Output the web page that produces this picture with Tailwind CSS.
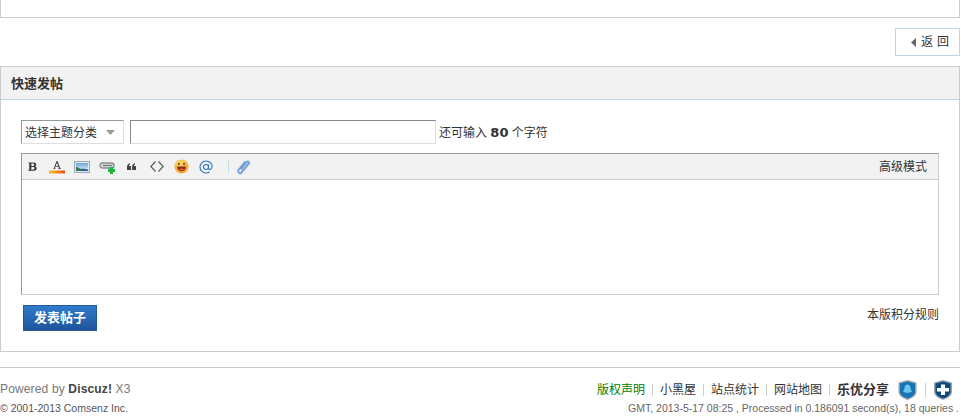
<!DOCTYPE html>
<html lang="zh-CN">
<head>
  <meta charset="UTF-8" />
  <title>快速发帖</title>
  <script src="https://cdn.jsdelivr.net/npm/@tailwindcss/browser@4"></script>
</head>
<body class="bg-white text-[12px] leading-[16px] text-[#444] font-['Liberation_Sans','Noto_Sans_CJK_SC',sans-serif] overflow-hidden">
 <div class="w-[960px]">

  <!-- end of the thread list -->
  <div class="h-[18px] border-x border-b border-[#cdcdcd]"></div>

  <div class="mt-[10px] flex justify-end">
    <a class="w-[65px] h-[28px] border border-[#c2d5e3] flex items-center justify-end pr-[10px] gap-[5px] text-[#333]">
      <svg width="5" height="9" viewBox="0 0 5 9"><path d="M5 0v9L0 4.500z" fill="#666"/></svg>
      <span class="tracking-[4px] mr-[-4px]">返回</span>
    </a>
  </div>

  <!-- quick post -->
  <section class="mt-[10px] h-[286px] border border-[#cdcdcd]">
    <h2 class="h-[33px] bg-[#f2f2f2] border-b border-[#c2d5e3] pl-[10px] pt-px flex items-center font-bold text-[13px] text-[#333]">快速发帖</h2>

    <div class="pt-[20px] pl-[20px] pr-[20px]">
      <div class="flex items-center h-[24px]">
        <div class="w-[103px] h-[24px] border border-[#ddd] border-t-[#999] border-l-[#999] flex items-center pl-[3px] pr-[8px] justify-between text-[#333]">
          <span class="pt-px">选择主题分类</span>
          <svg width="9" height="5" viewBox="0 0 9 5"><path d="M0 0h9L4.500 5z" fill="#999"/></svg>
        </div>
        <input type="text" class="ml-[6px] w-[306px] h-[24px] border border-[#ddd] border-t-[#888] border-l-[#888] outline-none" />
        <span class="ml-[3px] pt-px text-[#333]">还可输入 <strong class="text-[13px] font-['DejaVu_Sans',sans-serif] text-[#333]">80</strong> 个字符</span>
      </div>

      <div class="mt-[9px] h-[142px] w-[918px] border border-[#ccc] border-t-[#999] border-l-[#999]">
        <div class="h-[26px] bg-[#f2f2f2] border-b border-[#ccc] flex items-center relative text-[#333]">
          <div class="flex items-center pl-[5px] h-full">
            <!-- bold -->
            <svg class="w-[11px] h-[11px]" viewBox="0 0 12 12"><path d="M1.500 1.500h5.500c2 0 3 .9 3 2.300 0 1-.6 1.700-1.600 2 1.300.3 2.100 1.100 2.100 2.300 0 1.600-1.200 2.400-3.200 2.400H1.500v-1h1V2.500h-1zM4.700 2.600v2.900h1.600c1 0 1.500-.5 1.500-1.500s-.5-1.400-1.500-1.400zm0 3.900v3h1.800c1.100 0 1.700-.5 1.700-1.500s-.6-1.500-1.700-1.500z" fill="#333"/></svg>
            <!-- text colour -->
            <svg class="ml-[11px] w-[16px] h-[14px]" viewBox="0 0 16 14"><path d="M4.500 9h2v-.7H5.800l.5-1.300h3.300l.5 1.300h-.8V9h2.500v-.7h-.5L8.500 1h-1L4.900 8.300h-.4zM6.600 6.200 8 2.700l1.300 3.500z" fill="#444"/><defs><linearGradient id="tc"><stop offset="0" stop-color="#f5c518"/><stop offset="1" stop-color="#e8501a"/></linearGradient></defs><rect y="10.500" width="16" height="3" fill="url(#tc)"/></svg>
            <!-- image -->
            <svg class="ml-[9px] w-[16px] h-[12px]" viewBox="0 0 16 12"><rect x=".5" y=".5" width="15" height="11" fill="#dfe9f2" stroke="#9aa9b5"/><defs><linearGradient id="sky" x1="0" y1="0" x2="0" y2="1"><stop offset="0" stop-color="#6fa6d6"/><stop offset="1" stop-color="#e3eff8"/></linearGradient></defs><rect x="2" y="2" width="12" height="8" fill="url(#sky)"/><path d="M2 6c2 0 3 1 5 2h3v2H2z" fill="#3d7a52"/><path d="M7 8c2-.5 4 0 7 .5V10H7z" fill="#2a6194"/></svg>
            <!-- link -->
            <svg class="ml-[9px] w-[17px] h-[15px] mt-[2px]" viewBox="0 0 17 15"><rect x="1" y="3" width="14" height="5" rx="2.500" fill="#d8d8d8" stroke="#8d8d8d" stroke-width="1.400"/><path d="M4 5.500h9" stroke="#777" stroke-width="1.200"/><path d="M11 7h3v2h2v3h-2v2h-3v-2H9V9h2z" fill="#1db53c"/></svg>
            <!-- quote -->
            <svg class="ml-[11px] w-[9px] h-[7px]" viewBox="0 0 9 7"><path d="M0 4c0-2 1-3.300 3-4v1.300C2.300 1.700 2 2.200 2 3h2v4H0zM5 4c0-2 1-3.300 3-4v1.300C7.300 1.700 7 2.200 7 3h2v4H5z" fill="#444"/></svg>
            <!-- code -->
            <svg class="ml-[14px] w-[14px] h-[11px]" viewBox="0 0 14 11"><path d="M5.500 .5.800 5.500l4.700 5M8.500 .5l4.700 5-4.700 5" fill="none" stroke="#555" stroke-width="1.100"/></svg>
            <!-- smiley -->
            <svg class="ml-[10px] w-[15px] h-[15px]" viewBox="0 0 15 15"><defs><radialGradient id="face" cx=".4" cy=".3" r=".8"><stop offset="0" stop-color="#fdd96c"/><stop offset="1" stop-color="#f09a20"/></radialGradient></defs><circle cx="7.500" cy="7.500" r="7" fill="url(#face)"/><ellipse cx="5" cy="5" rx=".8" ry="1.200" fill="#6b3a12"/><ellipse cx="10" cy="5" rx=".8" ry="1.200" fill="#6b3a12"/><path d="M3 7.500h9c0 2.800-2 4.800-4.500 4.800S3 10.300 3 7.500z" fill="#8a3410"/><path d="M5 10c1.500-.8 3.500-.8 5 0-.5 1.800-4.500 1.800-5 0z" fill="#f0583f"/></svg>
            <!-- at -->
            <svg class="ml-[10px] w-[14px] h-[14px]" viewBox="0 0 14 14"><circle cx="7" cy="7" r="2.500" fill="none" stroke="#2a78bd" stroke-width="1.100"/><path d="M9.500 4.500v3.800c0 1.500 2.800 1.500 3.400-.6C13.700 4 11 1 7 1 3.500 1 1 3.700 1 7s2.500 6 6 6c1.500 0 2.700-.4 3.700-1.100" fill="none" stroke="#2a78bd" stroke-width="1.100"/></svg>
            <span class="ml-[15px] w-px h-[13px] bg-[#c5dce2]"></span>
            <!-- attachment -->
            <svg class="ml-[7px] w-[15px] h-[16px]" viewBox="0 0 15 16"><path d="M5 10.500 11 3c1-1.200 2.700.2 1.800 1.500L5.500 13.500c-1.500 1.800-4.400-.4-3-2.500L9.500 2.300" fill="none" stroke="#c9daee" stroke-width="3"/><path d="M5 10.500 11 3c1-1.200 2.700.2 1.800 1.500L5.500 13.500c-1.500 1.800-4.400-.4-3-2.500L9.500 2.300" fill="none" stroke="#6a98cf" stroke-width="1.300"/></svg>
          </div>
          <a class="absolute right-[11px] top-[5px]">高级模式</a>
        </div>
      </div>

      <div class="mt-[10px] flex justify-between items-start">
        <button class="ml-[2px] w-[74px] h-[26px] bg-gradient-to-b from-[#2f7ccc] to-[#20549c] border border-[#235994] text-white font-bold text-[13px]">发表帖子</button>
        <a class="mt-[2px] text-[#333]">本版积分规则</a>
      </div>
    </div>
  </section>

  <!-- footer -->
  <footer class="mt-[15px] border-t border-[#cdcdcd] pt-[12px] flex justify-between">
    <div>
      <p class="text-[#777] h-[20px] leading-[18px] tracking-[0.15px]">Powered by <strong class="text-[#444]">Discuz!</strong> X3</p>
      <p class="text-[10.500px] leading-[14px] text-[#555] mt-[1px]">© 2001-2013 Comsenz Inc.</p>
    </div>
    <div class="flex flex-col items-end">
      <div class="flex items-center h-[20px] pr-[8px] text-[#333]">
        <a class="text-[#008000]">版权声明</a>
        <span class="mx-[7px] w-px h-[12px] bg-[#cdcdcd]"></span>
        <a>小黑屋</a>
        <span class="mx-[7px] w-px h-[12px] bg-[#cdcdcd]"></span>
        <a>站点统计</a>
        <span class="mx-[7px] w-px h-[12px] bg-[#cdcdcd]"></span>
        <a>网站地图</a>
        <span class="mx-[7px] w-px h-[12px] bg-[#cdcdcd]"></span>
        <strong class="w-[52px] text-[13px] text-[#333]">乐优分享</strong>
        <svg class="ml-[9px] w-[19px] h-[20px]" viewBox="0 0 19 20"><path d="M.500 2.500 9.500 0l9 2.500V12c0 3.500-4.500 6.500-9 8-4.500-1.500-9-4.500-9-8z" fill="#9aa3aa"/><path d="M2 3.500 9.500 1.500l7.500 2V12c0 3-3.800 5.300-7.500 6.500C5.800 17.300 2 15 2 12z" fill="#1673b5"/><path d="M9.500 4.500c2 0 3 1.500 3 3.500 0 1 .8 2 1.500 3.500-1 .8-3 1.300-4.500 1.300S6 12.300 5 11.500C5.700 10 6.500 9 6.500 8c0-2 1-3.500 3-3.500z" fill="#6fc4ea"/></svg>
        <span class="mx-[8px] w-px h-[14px] bg-[#cdcdcd]"></span>
        <svg class="w-[18px] h-[20px]" viewBox="0 0 18 20"><path d="M0 2.500 9 0l9 2.500V12c0 3.500-4.500 6.500-9 8-4.500-1.500-9-4.500-9-8z" fill="#9aa3aa"/><path d="M1.500 3.500 9 1.500l7.500 2V12c0 3-3.800 5.300-7.500 6.500C5.300 17.300 1.500 15 1.500 12z" fill="#0f4a7a"/><path d="M7 4.500h4V8h4v3.500h-4V15H7v-3.500H3V8h4z" fill="#fff"/></svg>
      </div>
      <p class="text-[10.500px] leading-[14px] text-[#666] mt-[1px] pr-px">GMT, 2013-5-17 08:25 , Processed in 0.186091 second(s), 18 queries .</p>
    </div>
  </footer>
 </div>
</body>
</html>
